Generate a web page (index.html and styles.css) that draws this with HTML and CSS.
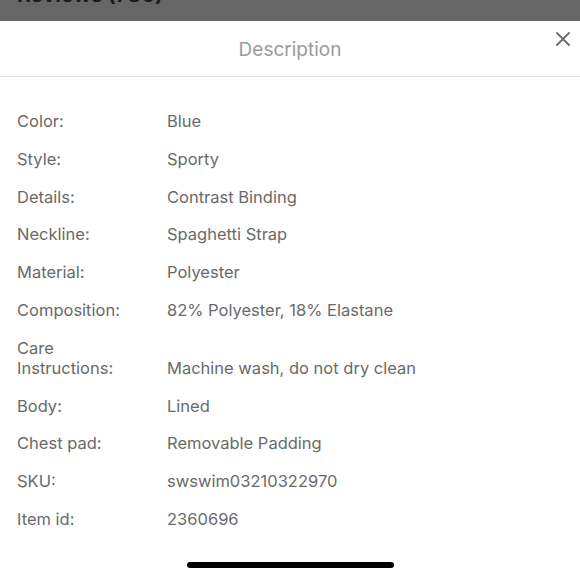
FILE: index.html
```html
<!DOCTYPE html>
<html>
<head>
<meta charset="utf-8">
<link rel="stylesheet" href="styles.css">
</head>
<body>
<div class="backdrop">
  <div class="backdrop-title">Reviews (786)</div>
</div>
<div class="sheet">
  <div class="sheet-header">
    <div class="sheet-title">Description</div>
    <button class="close" aria-label="Close">
      <svg width="14" height="14" viewBox="0 0 14 14"><path d="M1 1L13 13M13 1L1 13" stroke="#6b6b6b" stroke-width="1.8" stroke-linecap="round"/></svg>
    </button>
  </div>
  <div class="specs">
    <div class="row"><div class="label">Color:</div><div class="value">Blue</div></div>
    <div class="row"><div class="label">Style:</div><div class="value">Sporty</div></div>
    <div class="row"><div class="label">Details:</div><div class="value">Contrast Binding</div></div>
    <div class="row"><div class="label">Neckline:</div><div class="value">Spaghetti Strap</div></div>
    <div class="row"><div class="label">Material:</div><div class="value">Polyester</div></div>
    <div class="row"><div class="label">Composition:</div><div class="value">82% Polyester, 18% Elastane</div></div>
    <div class="row"><div class="label">Care<br>Instructions:</div><div class="value">Machine wash, do not dry clean</div></div>
    <div class="row"><div class="label">Body:</div><div class="value">Lined</div></div>
    <div class="row"><div class="label">Chest pad:</div><div class="value">Removable Padding</div></div>
    <div class="row"><div class="label">SKU:</div><div class="value">swswim03210322970</div></div>
    <div class="row"><div class="label">Item id:</div><div class="value">2360696</div></div>
  </div>
  <div class="home-bar"></div>
</div>
</body>
</html>
```

FILE: styles.css
```css
* { box-sizing: border-box; }
html, body {
  margin: 0;
  padding: 0;
  width: 580px;
  height: 580px;
  overflow: hidden;
  background: #fff;
  font-family: "Inter", "Liberation Sans", sans-serif;
}
.backdrop {
  height: 21px;
  background: #666666;
  overflow: hidden;
  position: relative;
}
.backdrop-title {
  margin-top: -17px;
  padding-left: 17px;
  font-size: 21px;
  line-height: 24px;
  font-weight: 700;
  color: #1c1c1c;
}
.sheet {
  background: #fff;
  height: 559px;
  display: flex;
  flex-direction: column;
}
.sheet-header {
  height: 56px;
  border-bottom: 1px solid #e8e8e8;
  display: flex;
  align-items: center;
  justify-content: center;
  position: relative;
}
.sheet-title {
  font-size: 19px;
  color: #9b9b9b;
  margin-top: 1px;
}
.close {
  position: absolute;
  right: 10px;
  top: 11px;
  width: 14px;
  height: 14px;
  padding: 0;
  border: none;
  background: none;
  display: flex;
}
.specs {
  padding: 34px 17px 0;
  display: flex;
  flex-direction: column;
  gap: 17.8px;
}
.row {
  display: flex;
  align-items: flex-end;
  font-size: 16.5px;
  line-height: 20px;
  color: #6a6a6a;
}
.label {
  width: 150px;
  flex: none;
}
.home-bar {
  margin: auto auto 12px;
  width: 207px;
  height: 6px;
  border-radius: 3px;
  background: #000;
}
```
